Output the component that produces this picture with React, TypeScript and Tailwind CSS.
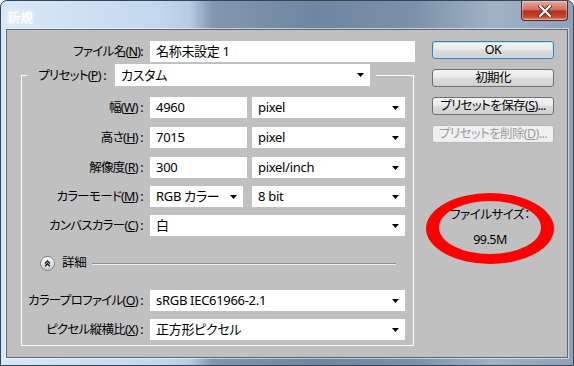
import type { ReactNode } from 'react';

function Arrow() {
  return (
    <svg className="w-[7px] h-[4px] shrink-0" viewBox="0 0 7 4">
      <path d="M0 0h7L3.5 4z" fill="#000" />
    </svg>
  );
}

function Field({ w, children, select }: { w: string; children: ReactNode; select?: boolean }) {
  return (
    <div className={`${w} h-[21px] shrink-0 bg-white flex items-center justify-between pl-[6px] pr-[6px] text-[13px] tracking-[-0.3px] leading-none`}>
      <span className="whitespace-nowrap">{children}</span>
      {select && <Arrow />}
    </div>
  );
}

function Label({ w, children }: { w: string; children: ReactNode }) {
  return (
    <div className={`${w} shrink-0 pr-[3px] text-right text-[12.5px] tracking-[-0.7px] leading-[21px] whitespace-nowrap`}>
      {children}
    </div>
  );
}

function Btn({ children, kind }: { children: ReactNode; kind?: 'default' | 'disabled' }) {
  const cls =
    kind === 'default'
      ? 'border-[#3c7fb1] shadow-[inset_0_0_0_1px_#bfe6fb] text-black'
      : kind === 'disabled'
        ? 'border-[#b5b8ba] text-[#9c9c9c] bg-none bg-[#f0f0f0]'
        : 'border-[#707070] text-black';
  return (
    <div
      className={`h-[18px] w-[122px] rounded-[3px] border flex items-center justify-center text-[12.5px] tracking-[-0.6px] leading-none whitespace-nowrap bg-[linear-gradient(#f3f3f3,#ebebeb_45%,#dddddd_50%,#d0d0d0)] ${cls}`}
    >
      {children}
    </div>
  );
}

export default function App() {
  return (
    <div className="w-[574px] h-[366px] overflow-hidden font-['Noto_Sans','Noto_Sans_CJK_JP',sans-serif] [font-feature-settings:'palt'] text-black">
      <div className="w-[574px] h-[366px] flex flex-col rounded-t-[7px] border border-[#34465a] bg-[linear-gradient(90deg,#d9e8f7_0%,#c2d7ee_28%,#b7cce3_33%,#8297af_37%,#6f86a0_55%,#7b90a9_72%,#a0b2c5_86%,#8ea1b6_100%)]">
        {/* title bar */}
        <div className="h-[28px] shrink-0 flex items-start justify-between">
          <div className="pl-[6px] pt-[7px] text-[13px] text-white [text-shadow:0_0_6px_#ffffff,0_0_2px_#dbe9f7]">新規</div>
          <div className="mr-[5px] w-[47px] h-[20px] rounded-b-[4px] border border-t-0 border-[#4a2a25] bg-[linear-gradient(#e7a99b,#d4705f_45%,#b8321f_52%,#c4402a_80%,#e08970)] shadow-[inset_0_0_0_1px_rgba(255,255,255,0.35)] flex items-center justify-center">
            <svg className="w-[14px] h-[12px]" viewBox="0 0 14 12">
              <path d="M2 1l10 10M12 1L2 11" stroke="#5a2620" strokeWidth="4" strokeLinecap="square" />
              <path d="M2 1l10 10M12 1L2 11" stroke="#ffffff" strokeWidth="2.2" strokeLinecap="square" />
            </svg>
          </div>
        </div>

        {/* client area */}
        <div className="mx-[5px] h-[329px] border border-[#5d6873] shadow-[0_0_0_1px_rgba(255,255,255,0.55)] bg-[#c0c0c0] flex">
          {/* left column */}
          <div className="w-[407px] shrink-0 flex flex-col">
            <div className="mt-[11px] flex items-center gap-[4px]">
              <Label w="w-[139px]">
                ファイル名(<u>N</u>):
              </Label>
              <Field w="w-[265px]">名称未設定 1</Field>
            </div>

            <fieldset className="mt-[2px] ml-[14px] w-[393px] border border-white pb-[5px] flex flex-col">
              <legend className="ml-[5px] pr-[6px]">
                <div className="flex items-center gap-[6px]">
                  <Label w="w-[82px]">
                    プリセット(<u>P</u>) :
                  </Label>
                  <div className="w-[255px] h-[22px] bg-white flex items-center justify-between pl-[6px] pr-[6px] text-[13px] tracking-[-0.3px] leading-none">
                    <span>カスタム</span>
                    <Arrow />
                  </div>
                </div>
              </legend>

              <div className="mt-[11px] flex items-center gap-[4px]">
                <Label w="w-[124px]">
                  幅(<u>W</u>) :
                </Label>
                <Field w="w-[97px]">4960</Field>
                <div className="ml-[1px]">
                  <Field w="w-[153px]" select>
                    pixel
                  </Field>
                </div>
              </div>

              <div className="mt-[9px] flex items-center gap-[4px]">
                <Label w="w-[124px]">
                  高さ(<u>H</u>) :
                </Label>
                <Field w="w-[97px]">7015</Field>
                <div className="ml-[1px]">
                  <Field w="w-[153px]" select>
                    pixel
                  </Field>
                </div>
              </div>

              <div className="mt-[9px] flex items-center gap-[4px]">
                <Label w="w-[124px]">
                  解像度(<u>R</u>) :
                </Label>
                <Field w="w-[97px]">300</Field>
                <div className="ml-[1px]">
                  <Field w="w-[153px]" select>
                    pixel/inch
                  </Field>
                </div>
              </div>

              <div className="mt-[8px] flex items-center gap-[4px]">
                <Label w="w-[124px]">
                  カラーモード(<u>M</u>) :
                </Label>
                <Field w="w-[93px]" select>
                  RGB カラー
                </Field>
                <div className="ml-[5px]">
                  <Field w="w-[153px]" select>
                    8 bit
                  </Field>
                </div>
              </div>

              <div className="mt-[8px] flex items-center gap-[4px]">
                <Label w="w-[124px]">
                  カンバスカラー(<u>C</u>) :
                </Label>
                <Field w="w-[255px]" select>
                  白
                </Field>
              </div>

              {/* 詳細 */}
              <div className="mt-[20px] h-[15px] flex items-center ml-[18px] mr-[17px]">
                <div className="w-[15px] h-[15px] shrink-0 rounded-full border border-[#7e7e7e] bg-[linear-gradient(#ffffff,#e4e4e4_50%,#c9c9c9)] flex items-center justify-center">
                  <svg className="w-[7px] h-[7px]" viewBox="0 0 7 7">
                    <path d="M1 3.5L3.5 1 6 3.5M1 6.2L3.5 3.7 6 6.2" fill="none" stroke="#1a1a1a" strokeWidth="1.3" />
                  </svg>
                </div>
                <span className="ml-[7px] text-[12.5px] tracking-[-0.3px] leading-none">詳細</span>
                <div className="ml-[6px] flex-1 h-px bg-[#8e8e8e] shadow-[0_1px_0_#ececec]" />
              </div>

              <div className="mt-[19px] flex items-center gap-[4px]">
                <Label w="w-[124px]">
                  カラープロファイル(<u>O</u>) :
                </Label>
                <Field w="w-[255px]" select>
                  sRGB IEC61966-2.1
                </Field>
              </div>

              <div className="mt-[8px] flex items-center gap-[4px]">
                <Label w="w-[124px]">
                  ピクセル縦横比(<u>X</u>) :
                </Label>
                <Field w="w-[255px]" select>
                  正方形ピクセル
                </Field>
              </div>
            </fieldset>
          </div>

          {/* right column */}
          <div className="ml-[18px] w-[122px] flex flex-col">
            <div className="mt-[11px] flex flex-col gap-[10px]">
              <Btn kind="default">OK</Btn>
              <Btn>初期化</Btn>
              <Btn>
                プリセットを保存(<u>S</u>)...
              </Btn>
              <Btn kind="disabled">
                プリセットを削除(<u>D</u>)...
              </Btn>
            </div>

            {/* file size, circled in red */}
            <div className="relative mt-[50px] -ml-[6px] w-[128px] h-[72px] flex flex-col items-center justify-center text-[12.5px] tracking-[-0.5px] leading-none">
              <svg className="absolute inset-0" width="128" height="72" viewBox="0 0 128 72">
                <ellipse cx="64" cy="35.5" rx="64" ry="35.5" fill="#ff0000" />
                <ellipse cx="64" cy="34.5" rx="51" ry="26.5" fill="#c0c0c0" />
              </svg>
              <span className="relative -mt-[3px]">ファイルサイズ：</span>
              <span className="relative mt-[13px]">99.5M</span>
            </div>
          </div>
        </div>
      </div>
    </div>
  );
}
